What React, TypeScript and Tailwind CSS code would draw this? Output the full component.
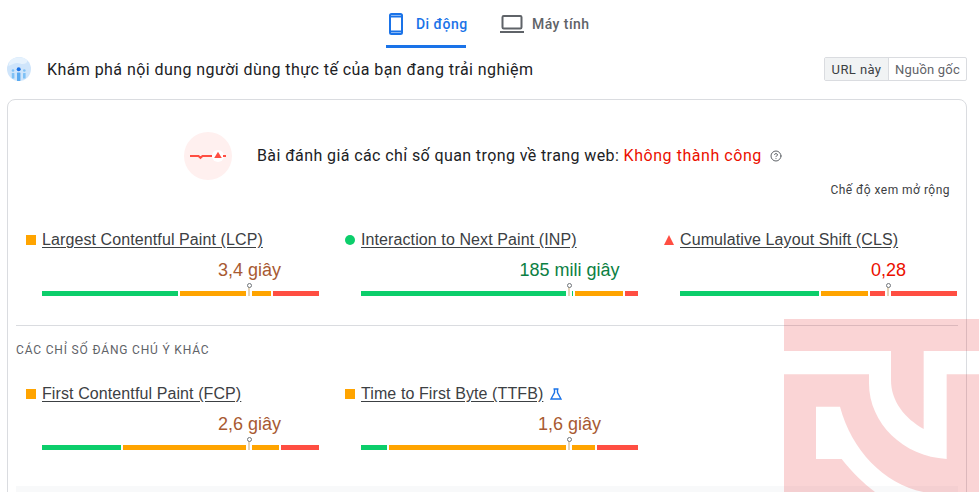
import { CircleHelp } from 'lucide-react';

type Seg = { color: string; width: number };

type Metric = {
  name: string;
  shape: 'square' | 'circle' | 'triangle';
  value: string;
  valueClass: string;
  marker: number; // px from bar start
  segs: Seg[];
  lab?: boolean;
};

const GREEN = 'bg-[#0cce6b]';
const ORANGE = 'bg-[#ffa400]';
const RED = 'bg-[#ff4e42]';

const coreMetrics: Metric[] = [
  {
    name: 'Largest Contentful Paint (LCP)',
    shape: 'square',
    value: '3,4 giây',
    valueClass: 'text-[#a85a32]',
    marker: 207,
    segs: [
      { color: GREEN, width: 136 },
      { color: ORANGE, width: 91 },
      { color: RED, width: 46 },
    ],
  },
  {
    name: 'Interaction to Next Paint (INP)',
    shape: 'circle',
    value: '185 mili giây',
    valueClass: 'text-[#0b8043]',
    marker: 208,
    segs: [
      { color: GREEN, width: 212 },
      { color: ORANGE, width: 48 },
      { color: RED, width: 13 },
    ],
  },
  {
    name: 'Cumulative Layout Shift (CLS)',
    shape: 'triangle',
    value: '0,28',
    valueClass: 'text-[#eb0f00]',
    marker: 208,
    segs: [
      { color: GREEN, width: 139 },
      { color: ORANGE, width: 47 },
      { color: RED, width: 87 },
    ],
  },
];

const otherMetrics: Metric[] = [
  {
    name: 'First Contentful Paint (FCP)',
    shape: 'square',
    value: '2,6 giây',
    valueClass: 'text-[#a85a32]',
    marker: 207,
    segs: [
      { color: GREEN, width: 79 },
      { color: ORANGE, width: 156 },
      { color: RED, width: 38 },
    ],
  },
  {
    name: 'Time to First Byte (TTFB)',
    shape: 'square',
    value: '1,6 giây',
    valueClass: 'text-[#a85a32]',
    marker: 208,
    lab: true,
    segs: [
      { color: GREEN, width: 26 },
      { color: ORANGE, width: 206 },
      { color: RED, width: 41 },
    ],
  },
];

function PhoneIcon() {
  return (
    <svg width="14" height="22" viewBox="0 0 14 22" fill="none" stroke="#1a73e8" strokeWidth="2" className="shrink-0">
      <rect x="1" y="1" width="12" height="20" rx="1.5" />
      <path d="M1 3.5h12M1 18.5h12" />
    </svg>
  );
}

function LaptopIcon() {
  return (
    <svg width="24" height="18" viewBox="0 0 24 18" fill="none" stroke="#5f6368" strokeWidth="2" className="shrink-0">
      <rect x="2.5" y="1" width="19" height="12.5" rx="1.2" />
      <path d="M0 17h24" />
    </svg>
  );
}

function CruxIcon() {
  return (
    <svg width="24" height="24" viewBox="0 0 24 24" className="shrink-0">
      <circle cx="12" cy="12" r="12" fill="#cfe5fb" />
      <path d="M4 3C8 0 15 -1 20 3C21 6 17 8 13 6.500C9 5 6 7 1.500 9C1.500 7 2.500 4.500 4 3Z" fill="#e6f2fd" />
      <circle cx="11.700" cy="12.300" r="2" fill="#1a73e8" />
      <circle cx="6" cy="13.500" r="1.300" fill="#7fc1f5" />
      <circle cx="17.300" cy="13.500" r="1.300" fill="#7fc1f5" />
      <rect x="4.800" y="16" width="2.600" height="5.500" rx="0.500" fill="#7fc1f5" />
      <rect x="10" y="15.500" width="3.400" height="8.500" rx="0.500" fill="#5aaaf0" />
      <rect x="16" y="16" width="2.600" height="5.500" rx="0.500" fill="#7fc1f5" />
    </svg>
  );
}

function PulseIcon() {
  return (
    <svg width="48" height="48" viewBox="0 0 48 48" className="shrink-0">
      <circle cx="24" cy="24" r="24" fill="#fff0ef" />
      <path d="M6 24h8.500l2 1.800 2-1.800h9.500" fill="none" stroke="#ff4e42" strokeWidth="2" />
      <circle cx="34" cy="24" r="6" fill="#ffffff" />
      <path d="M34 19.800l3.800 6.200h-7.600z" fill="#ff4e42" />
      <path d="M39 24h3" stroke="#ff4e42" strokeWidth="2" />
    </svg>
  );
}

function FlaskIcon() {
  return (
    <svg width="12" height="12" viewBox="0 0 12 12" fill="none" stroke="#1a73e8" strokeWidth="1.400" className="ml-[1px]">
      <path d="M3.500 1h5M4.500 1v3.500L1 11h10L7.500 4.500V1" />
    </svg>
  );
}

function Shape({ shape }: { shape: Metric['shape'] }) {
  if (shape === 'square') return <span className="w-[10px] h-[10px] bg-[#ffa400] shrink-0" />;
  if (shape === 'circle') return <span className="w-[10px] h-[10px] rounded-full bg-[#0cce6b] shrink-0" />;
  return (
    <svg width="10" height="10" viewBox="0 0 10 10" className="shrink-0">
      <path d="M5 0l5 10H0z" fill="#ff4e42" />
    </svg>
  );
}

function MetricCell({ metric }: { metric: Metric }) {
  return (
    <div className="w-[293px]">
      <div className="flex items-center gap-[6px] h-[20px]">
        <Shape shape={metric.shape} />
        <span className="text-[16px] leading-[20px] tracking-[0.1px] text-[#3c4043] underline underline-offset-2 whitespace-nowrap">
          {metric.name}
        </span>
        {metric.lab && <FlaskIcon />}
      </div>
      <div className="relative ml-[16px] h-[46px] w-[277px]">
        <div
          className={`absolute top-[9px] -translate-x-1/2 text-[18px] leading-[22px] whitespace-nowrap ${metric.valueClass}`}
          style={{ left: metric.marker + 0.5 }}
        >
          {metric.value}
        </div>
        <div className="absolute left-0 right-0 top-[41px] flex gap-[2px] h-[5px]">
          {metric.segs.map((s, i) => (
            <div key={i} className={s.color} style={{ width: s.width }} />
          ))}
        </div>
        <div
          className="absolute top-[41px] w-[6px] h-[5px] bg-white"
          style={{ left: metric.marker - 3 }}
        />
        <div
          className="absolute top-[37px] w-[2px] h-[9px] bg-[#e3d3b8]"
          style={{ left: metric.marker - 1 }}
        />
        <div
          className="absolute top-[33px] w-[5px] h-[5px] rounded-full border border-[#70757a] bg-white"
          style={{ left: metric.marker - 2.5 }}
        />
      </div>
    </div>
  );
}

function Watermark() {
  return (
    <svg
      width="195"
      height="173"
      viewBox="12 27 585 519"
      className="absolute left-[784px] top-[319px] pointer-events-none"
    >
      <path
        d="M12 27H597V123H431V357C375 325 333 275 333 210V123H12Z"
        fill="#e8282b"
        fillOpacity="0.2"
      />
      <path
        fillRule="evenodd"
        d="M12 193H267V220C267 340 370 440 500 447V193H597V546H12ZM108 290V447H185C215 485 250 520 285 546H430C310 520 215 420 180 290Z"
        fill="#e8282b"
        fillOpacity="0.2"
      />
    </svg>
  );
}

export default function App() {
  return (
    <div className="relative w-[980px] h-[492px] overflow-hidden bg-white font-['Liberation_Sans',sans-serif]">
      {/* device tabs */}
      <div className="flex h-[48px] pl-[386px]">
        <div className="flex w-[80px] items-center gap-[13px] pl-[3px] pt-[3px] border-b-[3px] border-[#1a73e8] font-['Roboto',sans-serif] text-[14px] font-medium text-[#1a73e8] whitespace-nowrap">
          <PhoneIcon />
          <span className="tracking-[0.45px]">Di động</span>
        </div>
        <div className="flex items-center gap-[8px] ml-[34px] font-['Roboto',sans-serif] text-[14px] font-medium text-[#5f6368] whitespace-nowrap">
          <LaptopIcon />
          <span className="tracking-[0.45px]">Máy tính</span>
        </div>
      </div>

      {/* CrUX header */}
      <div className="flex items-center h-[24px] mt-[9px] pl-[7px] pr-[13px]">
        <CruxIcon />
        <span className="ml-[16px] pt-[2px] font-['Roboto',sans-serif] text-[16px] text-[#202124] tracking-[0.43px] whitespace-nowrap">
          Khám phá nội dung người dùng thực tế của bạn đang trải nghiệm
        </span>
        <div className="ml-auto flex h-[24px] rounded-[2px] border border-[#dadce0] font-['Roboto',sans-serif] text-[13px] text-[#3c4043] tracking-[0.4px]">
          <span className="flex items-center justify-center pt-[1px] w-[64px] bg-[#f1f3f4] border-r border-[#dadce0] whitespace-nowrap">
            URL này
          </span>
          <span className="flex items-center justify-center pt-[1px] w-[77px] text-[#5f6368] tracking-[0.2px] whitespace-nowrap">
            Nguồn gốc
          </span>
        </div>
      </div>

      {/* report card */}
      <div className="mt-[18px] ml-[7px] w-[960px] h-[420px] rounded-t-[8px] border border-[#dadce0] pl-[8px] pr-[8px]">
        <div className="flex items-center h-[48px] mt-[32px] ml-[168px]">
          <PulseIcon />
          <div className="ml-[25px] font-['Roboto',sans-serif] text-[16px] text-[#202124] tracking-[0.4px] whitespace-nowrap">
            Bài đánh giá các chỉ số quan trọng về trang web:{' '}
            <span className="text-[#eb0f00] tracking-[0.55px]">Không thành công</span>
          </div>
          <CircleHelp className="ml-[8px] w-[12px] h-[12px] text-[#5f6368]" />
        </div>

        <div className="mt-[2px] h-[16px] pr-[8px] text-right font-['Roboto',sans-serif] text-[12px] leading-[16px] text-[#3c4043] tracking-[0.48px]">
          Chế độ xem mở rộng
        </div>

        <div className="flex gap-[26px] pl-[10px] mt-[32px]">
          {coreMetrics.map((m) => (
            <MetricCell key={m.name} metric={m} />
          ))}
        </div>

        <div className="mt-[29px] border-t border-[#dadce0]" />

        <div className="mt-[16px] h-[16px] font-['Roboto',sans-serif] text-[12px] leading-[16px] text-[#5f6368] tracking-[0.83px]">
          CÁC CHỈ SỐ ĐÁNG CHÚ Ý KHÁC
        </div>

        <div className="flex gap-[26px] pl-[10px] mt-[26px]">
          {otherMetrics.map((m) => (
            <MetricCell key={m.name} metric={m} />
          ))}
        </div>

        <div className="mt-[36px] h-[10px] bg-[#f8f9fa]" />
      </div>

      <Watermark />
    </div>
  );
}
